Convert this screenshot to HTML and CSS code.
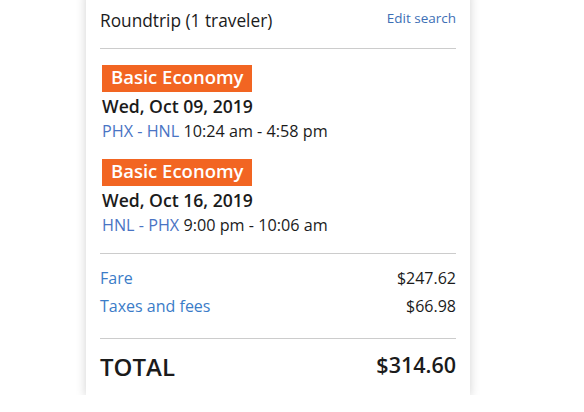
FILE: index.html
```html
<!DOCTYPE html>
<html lang="en">
<head>
<meta charset="utf-8">
<title>Trip summary</title>
<link rel="stylesheet" href="styles.css">
</head>
<body>
<div class="card">
  <div class="head">
    <h1 class="title">Roundtrip (1 traveler)</h1>
    <a class="edit" href="#">Edit search</a>
  </div>
  <div class="segments">
    <div class="segment">
      <span class="badge">Basic Economy</span>
      <div class="date">Wed, Oct 09, 2019</div>
      <div class="route"><span class="codes">PHX - HNL</span> 10:24 am - 4:58 pm</div>
    </div>
    <div class="segment">
      <span class="badge">Basic Economy</span>
      <div class="date">Wed, Oct 16, 2019</div>
      <div class="route"><span class="codes">HNL - PHX</span> 9:00 pm - 10:06 am</div>
    </div>
  </div>
  <div class="prices">
    <div class="row"><span class="label">Fare</span><span class="amt">$247.62</span></div>
    <div class="row"><span class="label">Taxes and fees</span><span class="amt">$66.98</span></div>
  </div>
  <div class="total">
    <span class="total-label">TOTAL</span>
    <span class="total-amt">$314.60</span>
  </div>
</div>
</body>
</html>
```

FILE: styles.css
```css
html, body {
  margin: 0;
  padding: 0;
  background: #ffffff;
}

body {
  font-family: "Open Sans", "Liberation Sans", sans-serif;
  color: #1b1b1b;
}

.card {
  width: 384px;
  box-sizing: border-box;
  margin: -10px 0 0 86px;
  padding: 19px 14px 12px;
  background: #ffffff;
  box-shadow: 0 2px 10px rgba(0, 0, 0, 0.18);
}

.head {
  display: flex;
  justify-content: space-between;
  align-items: flex-start;
  padding-bottom: 15px;
  border-bottom: 1px solid #cccccc;
}

.title {
  margin: 0;
  font-size: 17.3px;
  font-weight: 400;
  line-height: 24px;
}

.edit {
  font-size: 13.5px;
  line-height: 18px;
  color: #3d6fb5;
  text-decoration: none;
}

.segments {
  padding: 16px 0 15px 2px;
  border-bottom: 1px solid #cccccc;
  display: flex;
  flex-direction: column;
  gap: 15px;
}

.segment {
  display: flex;
  flex-direction: column;
  align-items: flex-start;
}

.badge {
  display: inline-block;
  background: #f26522;
  color: #ffffff;
  font-size: 18.5px;
  font-weight: 600;
  line-height: 24px;
  padding: 0 9px 3px;
  margin-bottom: 2px;
}

.date {
  font-size: 17.6px;
  font-weight: 600;
  line-height: 25px;
}

.route {
  font-size: 16.2px;
  line-height: 25px;
}

.codes {
  color: #4a74c4;
}

.prices {
  padding: 10px 0 18px;
  border-bottom: 1px solid #cccccc;
}

.row {
  display: flex;
  justify-content: space-between;
  font-size: 16px;
  line-height: 28px;
}

.label {
  color: #3b7cc8;
}

.total {
  display: flex;
  justify-content: space-between;
  align-items: flex-start;
  padding-top: 12px;
}

.total-label {
  font-size: 24px;
  font-weight: 600;
  line-height: 32px;
}

.total-amt {
  font-size: 21.5px;
  font-weight: 600;
  line-height: 27px;
}
```
